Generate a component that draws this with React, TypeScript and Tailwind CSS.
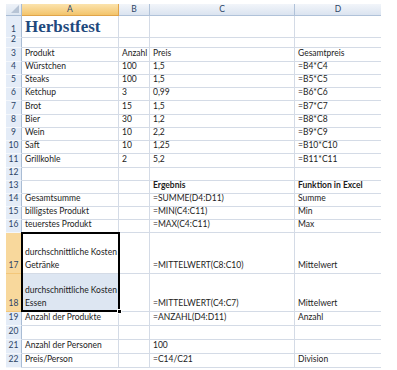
import { ReactNode } from 'react'

type Row = {
  n: number
  h: number
  a?: ReactNode
  b?: string
  c?: string
  d?: string
  bold?: boolean
  dark?: boolean
}

const rows: Row[] = [
  { n: 1, h: 22, a: <span className="text-[17px] font-bold leading-none text-[#1f497d] [font-family:'Liberation_Serif',serif]">Herbstfest</span> },
  { n: 2, h: 10 },
  { n: 3, h: 14, a: 'Produkt', b: 'Anzahl', c: 'Preis', d: 'Gesamtpreis' },
  { n: 4, h: 13, a: 'Würstchen', b: '100', c: '1,5', d: '=B4*C4' },
  { n: 5, h: 13, a: 'Steaks', b: '100', c: '1,5', d: '=B5*C5' },
  { n: 6, h: 13, a: 'Ketchup', b: '3', c: '0,99', d: '=B6*C6' },
  { n: 7, h: 14, a: 'Brot', b: '15', c: '1,5', d: '=B7*C7' },
  { n: 8, h: 13, a: 'Bier', b: '30', c: '1,2', d: '=B8*C8' },
  { n: 9, h: 13, a: 'Wein', b: '10', c: '2,2', d: '=B9*C9' },
  { n: 10, h: 13, a: 'Saft', b: '10', c: '1,25', d: '=B10*C10' },
  { n: 11, h: 14, a: 'Grillkohle', b: '2', c: '5,2', d: '=B11*C11' },
  { n: 12, h: 13, dark: true },
  { n: 13, h: 13, c: 'Ergebnis', d: 'Funktion in Excel', bold: true },
  { n: 14, h: 13, a: 'Gesamtsumme', c: '=SUMME(D4:D11)', d: 'Summe' },
  { n: 15, h: 13, a: 'billigstes Produkt', c: '=MIN(C4:C11)', d: 'Min' },
  { n: 16, h: 13, a: 'teuerstes Produkt', c: '=MAX(C4:C11)', d: 'Max' },
  { n: 17, h: 41, a: <>durchschnittliche Kosten<br />Getränke</>, c: '=MITTELWERT(C8:C10)', d: 'Mittelwert' },
  { n: 18, h: 38, a: <>durchschnittliche Kosten<br />Essen</>, c: '=MITTELWERT(C4:C7)', d: 'Mittelwert' },
  { n: 19, h: 14, a: 'Anzahl der Produkte', c: '=ANZAHL(D4:D11)', d: 'Anzahl' },
  { n: 20, h: 14 },
  { n: 21, h: 14, a: 'Anzahl der Personen', c: '100' },
  { n: 22, h: 14, a: 'Preis/Person', c: '=C14/C21', d: 'Division' },
]

function Cell({ w, children, bold, dark, extra = '' }: { w: string; children?: ReactNode; bold?: boolean; dark?: boolean; extra?: string }) {
  return (
    <div
      className={`${w} shrink-0 flex items-end pl-[3px] pb-[1px] border-r border-[#d4dbe6] ${dark ? 'border-b border-b-[#555]' : 'border-b'} border-b-[#d4dbe6] whitespace-nowrap overflow-hidden leading-[13px] ${bold ? 'font-bold' : ''} ${extra}`}
    >
      <div>{children}</div>
    </div>
  )
}

export default function App() {
  return (
    <div className="w-[397px] h-[370px] bg-white pl-[6px] pt-[4px] overflow-hidden text-[8.5px] text-[#1c1c1c] [font-family:Lato,'Liberation_Sans',sans-serif]">
      {/* column headers */}
      <div className="flex h-[12px] text-[#2c4566]">
        <div className="w-[16px] relative bg-gradient-to-b from-[#eef2f8] to-[#dde6f1] border-r border-b border-[#a9bcd4]">
          <div className="absolute right-[2px] bottom-[2px] w-0 h-0 border-l-[8px] border-l-transparent border-b-[8px] border-b-[#b7c4d5]" />
        </div>
        <div className="w-[97px] flex items-center justify-center bg-gradient-to-b from-[#fbe3ad] to-[#f3c46a] border-r border-b border-[#e0a44a]">A</div>
        <div className="w-[31px] flex items-center justify-center bg-gradient-to-b from-[#f2f5fa] to-[#dbe4f0] border-r border-b border-[#b0c2d9]">B</div>
        <div className="w-[145px] flex items-center justify-center bg-gradient-to-b from-[#f2f5fa] to-[#dbe4f0] border-r border-b border-[#b0c2d9]">C</div>
        <div className="w-[86px] flex items-center justify-center bg-gradient-to-b from-[#f2f5fa] to-[#dbe4f0] border-b border-[#b0c2d9]">D</div>
      </div>

      <div className="relative">
        {rows.map((r) => {
          const sel = r.n === 17 || r.n === 18
          return (
            <div key={r.n} className="flex" style={{ height: r.h }}>
              <div
                className={`w-[16px] shrink-0 flex items-end justify-center pb-[1px] leading-[13px] border-r border-b ${
                  sel ? 'bg-[#f8d89c] border-r-[#e0a44a] border-b-[#f3c77a]' : 'bg-[#e4ecf7] border-r-[#a9bcd4] border-b-[#f4f7fb]'
                } text-[#2c4566]`}
              >
                {r.n}
              </div>
              <Cell w="w-[97px]" bold={r.bold} dark={r.dark} extra={r.n === 18 ? 'bg-[#dde6f2]' : ''}>
                {r.a}
              </Cell>
              <Cell w="w-[31px]" bold={r.bold} dark={r.dark}>{r.b}</Cell>
              <Cell w="w-[145px]" bold={r.bold} dark={r.dark}>{r.c}</Cell>
              <Cell w="w-[86px]" bold={r.bold} dark={r.dark} extra="border-r-0">{r.d}</Cell>
            </div>
          )
        })}
        {/* selection A17:A18 */}
        <div className="absolute left-[15px] top-[216px] w-[99px] h-[80px] border-2 border-black pointer-events-none">
          <div className="absolute -right-[4px] -bottom-[4px] w-[5px] h-[5px] bg-black border border-white" />
        </div>
      </div>
    </div>
  )
}
